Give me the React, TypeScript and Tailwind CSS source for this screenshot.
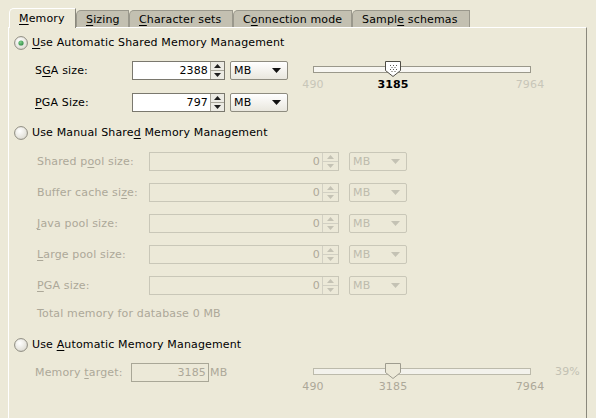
import React from 'react';

const DIS = 'text-[#aca899]';

function Mn({ text, u, className = '' }: { text: string; u: number; className?: string }) {
  return (
    <span className={className}>
      {text.slice(0, u)}
      <span className="underline decoration-1 underline-offset-[2px]">{text[u]}</span>
      {text.slice(u + 1)}
    </span>
  );
}

function Radio({ checked }: { checked?: boolean }) {
  return (
    <svg width="14" height="14" viewBox="0 0 14 14" className="shrink-0">
      <defs>
        <radialGradient id="rg" cx="0.4" cy="0.35" r="0.7">
          <stop offset="0" stopColor="#ffffff" />
          <stop offset="1" stopColor="#dcdad0" />
        </radialGradient>
        <radialGradient id="dot" cx="0.4" cy="0.35" r="0.7">
          <stop offset="0" stopColor="#7fd08a" />
          <stop offset="1" stopColor="#2f8a44" />
        </radialGradient>
      </defs>
      <circle cx="7" cy="7" r="6.4" fill="url(#rg)" stroke="#8c8a7f" strokeWidth="1" />
      {checked && <circle cx="7" cy="7" r="2.6" fill="url(#dot)" />}
    </svg>
  );
}

function Spinner({ disabled, w }: { disabled?: boolean; w: number }) {
  const c = disabled ? '#c4c2b4' : '#1e1e1e';
  return (
    <div
      className={`flex flex-col border-l ${disabled ? 'border-[#d2d0c3]' : 'border-[#a8a69a] bg-[#ecebe4]'}`}
      style={{ width: w }}
    >
      <div className={`flex flex-1 items-center justify-center border-b ${disabled ? 'border-[#d2d0c3]' : 'border-[#a8a69a]'}`}>
        <svg width="7" height="4" viewBox="0 0 7 4">
          <path d="M0 4 L3.5 0 L7 4 Z" fill={c} />
        </svg>
      </div>
      <div className="flex flex-1 items-center justify-center">
        <svg width="7" height="4" viewBox="0 0 7 4">
          <path d="M0 0 L3.5 4 L7 0 Z" fill={c} />
        </svg>
      </div>
    </div>
  );
}

function SpinField({ value, textW, spinW, disabled }: { value: string; textW: number; spinW: number; disabled?: boolean }) {
  return (
    <div className={`flex h-[19px] border ${disabled ? 'border-[#c9c7b8]' : 'border-[#7a786e] bg-white'}`}>
      <div
        className={`flex items-center justify-end pr-[2px] ${disabled ? DIS : 'text-black'}`}
        style={{ width: textW - 1 }}
      >
        {value}
      </div>
      <Spinner disabled={disabled} w={spinW} />
    </div>
  );
}

function Combo({ disabled }: { disabled?: boolean }) {
  return (
    <div
      className={`flex h-[19px] w-[58px] items-center justify-between rounded-[2px] border pl-[3px] pr-[6px] ${
        disabled
          ? 'border-[#c9c7b8] text-[#bdbbad]'
          : 'border-[#8e8c80] bg-gradient-to-b from-white to-[#e9e7de] text-black'
      }`}
    >
      <span>MB</span>
      <svg width="9" height="5" viewBox="0 0 9 5">
        <path d="M0 0 L9 0 L4.5 5 Z" fill={disabled ? '#c4c2b4' : '#111'} />
      </svg>
    </div>
  );
}

function Thumb({ disabled }: { disabled?: boolean }) {
  return (
    <svg width="16" height="16" viewBox="0 0 16 16">
      <path
        d="M0.5 0.5 H15.5 V9.5 L8 15.5 L0.5 9.5 Z"
        fill={disabled ? '#ece9d8' : '#ffffff'}
        stroke={disabled ? '#9e9c8f' : '#4f4d45'}
      />
      {!disabled &&
        [
          [5, 4], [8, 4], [11, 4],
          [6.5, 6], [9.5, 6],
          [5, 8], [8, 8], [11, 8],
          [6.5, 10], [9.5, 10],
        ].map(([x, y], i) => <rect key={i} x={x} y={y} width="1" height="1" fill="#5a5850" />)}
    </svg>
  );
}

function Slider({ disabled }: { disabled?: boolean }) {
  return (
    <div className="relative h-[30px] w-[240px] shrink-0">
      <div
        className={`absolute left-[10px] top-[5px] h-[7px] w-[218px] border ${
          disabled ? 'border-[#bcbaab] bg-[#f3f2ec]' : 'border-[#9a988b] bg-[#f7f6f1]'
        }`}
      />
      <div className="absolute left-[82px] top-0">
        <Thumb disabled={disabled} />
      </div>
      <span className={`absolute left-[-5px] top-[17px] w-[30px] text-center ${disabled ? DIS : 'text-[#c8c6b8]'}`}>490</span>
      <span className={`absolute left-[70px] top-[17px] w-[40px] text-center ${disabled ? DIS : 'font-bold text-black'}`}>
        3185
      </span>
      <span className={`absolute left-[207px] top-[17px] w-[40px] text-center ${disabled ? DIS : 'text-[#c8c6b8]'}`}>7964</span>
    </div>
  );
}

function Tab({ label, u, w, selected }: { label: string; u: number; w: number; selected?: boolean }) {
  return (
    <div
      className={`flex items-center rounded-tl-[5px] border-l border-t border-r pl-[9px] ${
        selected
          ? 'relative z-10 -mb-px h-[20px] border-l-white border-t-white border-r-[#8a887c] bg-[#ece9d8]'
          : 'h-[17px] border-[#9a988c] bg-[#c3c0b1]'
      }`}
      style={{ width: w }}
    >
      <Mn text={label} u={u} />
    </div>
  );
}

const disabledRows = [
  { label: 'Shared pool size:', u: 8 },
  { label: 'Buffer cache size:', u: 15 },
  { label: 'Java pool size:', u: 0 },
  { label: 'Large pool size:', u: 0 },
  { label: 'PGA size:', u: 0 },
];

export default function App() {
  return (
    <div className="h-[418px] w-[596px] overflow-hidden bg-[#ece9d8] pl-[8px] pt-[8px] font-['DejaVu_Sans',sans-serif] text-[11px] leading-[13px] tracking-[0.15px] text-black">
      <div className="flex h-[19px] items-end pl-[1px]">
        <Tab label="Memory" u={0} w={67} selected />
        <Tab label="Sizing" u={0} w={53} />
        <Tab label="Character sets" u={0} w={104} />
        <Tab label="Connection mode" u={1} w={119} />
        <Tab label="Sample schemas" u={5} w={118} />
      </div>
      <div className="h-[400px] w-[579px] border-l border-t border-r border-l-white border-t-white border-r-[#8a887c]">
        <div className="ml-[5px] mt-[7px] flex h-[15px] items-center gap-[4px]">
          <Radio checked />
          <Mn text="Use Automatic Shared Memory Management" u={0} />
        </div>

        <div className="ml-[26px] mt-[11px] flex items-start">
          <div className="flex w-[268px] flex-col gap-[13px]">
            <div className="flex h-[19px] items-center">
              <Mn text="SGA size:" u={1} className="w-[97px]" />
              <SpinField value="2388" textW={78} spinW={14} />
              <div className="ml-[5px]">
                <Combo />
              </div>
            </div>
            <div className="flex h-[19px] items-center">
              <Mn text="PGA Size:" u={0} className="w-[97px]" />
              <SpinField value="797" textW={78} spinW={14} />
              <div className="ml-[5px]">
                <Combo />
              </div>
            </div>
          </div>
          <Slider />
        </div>

        <div className="ml-[5px] mt-[13px] flex h-[15px] items-center gap-[4px]">
          <Radio />
          <Mn text="Use Manual Shared Memory Management" u={16} />
        </div>

        <div className="ml-[28px] mt-[12px] flex flex-col gap-[12px]">
          {disabledRows.map((r) => (
            <div key={r.label} className="flex h-[19px] items-center">
              <Mn text={r.label} u={r.u} className={`w-[112px] ${DIS}`} />
              <SpinField value="0" textW={173} spinW={16} disabled />
              <div className="ml-[10px]">
                <Combo disabled />
              </div>
            </div>
          ))}
        </div>

        <div className={`ml-[28px] mt-[12px] h-[13px] ${DIS}`}>Total memory for database 0 MB</div>

        <div className="ml-[5px] mt-[17px] flex h-[15px] items-center gap-[4px]">
          <Radio />
          <Mn text="Use Automatic Memory Management" u={4} />
        </div>

        <div className="ml-[26px] mt-[11px] flex items-start">
          <div className="flex h-[19px] w-[268px] items-center">
            <Mn text="Memory target:" u={7} className={`w-[96px] ${DIS}`} />
            <div className={`flex h-[19px] w-[78px] items-center justify-end border border-[#a9a797] pr-[2px] ${DIS}`}>
              3185
            </div>
            <span className={`ml-[1px] ${DIS}`}>MB</span>
          </div>
          <Slider disabled />
          <span className="ml-[12px] mt-[2px] text-[#c3c1b3]">39%</span>
        </div>
      </div>
    </div>
  );
}
